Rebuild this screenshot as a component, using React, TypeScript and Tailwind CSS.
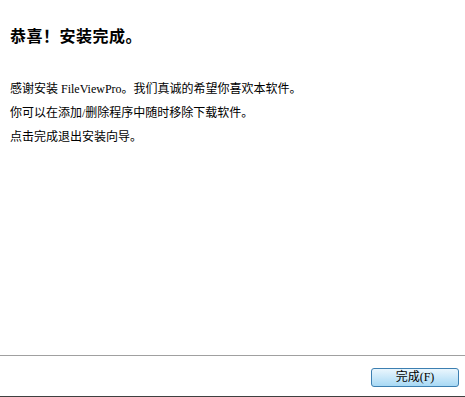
import React from "react";

const cjk = '"Liberation Serif", "Noto Sans CJK SC", serif';

const App: React.FC = () => {
  return (
    <div
      className="w-[465px] h-[397px] bg-white flex flex-col text-black overflow-hidden"
      style={{ fontFamily: cjk }}
    >
      <div className="flex-1 px-[10px]">
        <h1 className="mt-[27px] text-[16px] leading-[20px] font-bold tracking-[0.5px]">恭喜！安装完成。</h1>
        <div className="mt-[36px] flex flex-col gap-[12px] text-[12px] leading-[12px]">
          <p>感谢安装 FileViewPro。我们真诚的希望你喜欢本软件。</p>
          <p>你可以在添加/删除程序中随时移除下载软件。</p>
          <p>点击完成退出安装向导。</p>
        </div>
      </div>
      <div className="h-px bg-[#a0a0a0]" />
      <div className="h-[40px] flex items-start justify-end pr-[6px] pt-[12px]">
        <button className="w-[88px] h-[19px] rounded-[3px] border border-[#3c7fb1] bg-gradient-to-b from-[#eaf6fd] to-[#a7d9f5] text-[12px] leading-[17px] text-black">
          完成(F)
        </button>
      </div>
      <div className="h-px bg-[#404040]" />
    </div>
  );
};

export default App;
